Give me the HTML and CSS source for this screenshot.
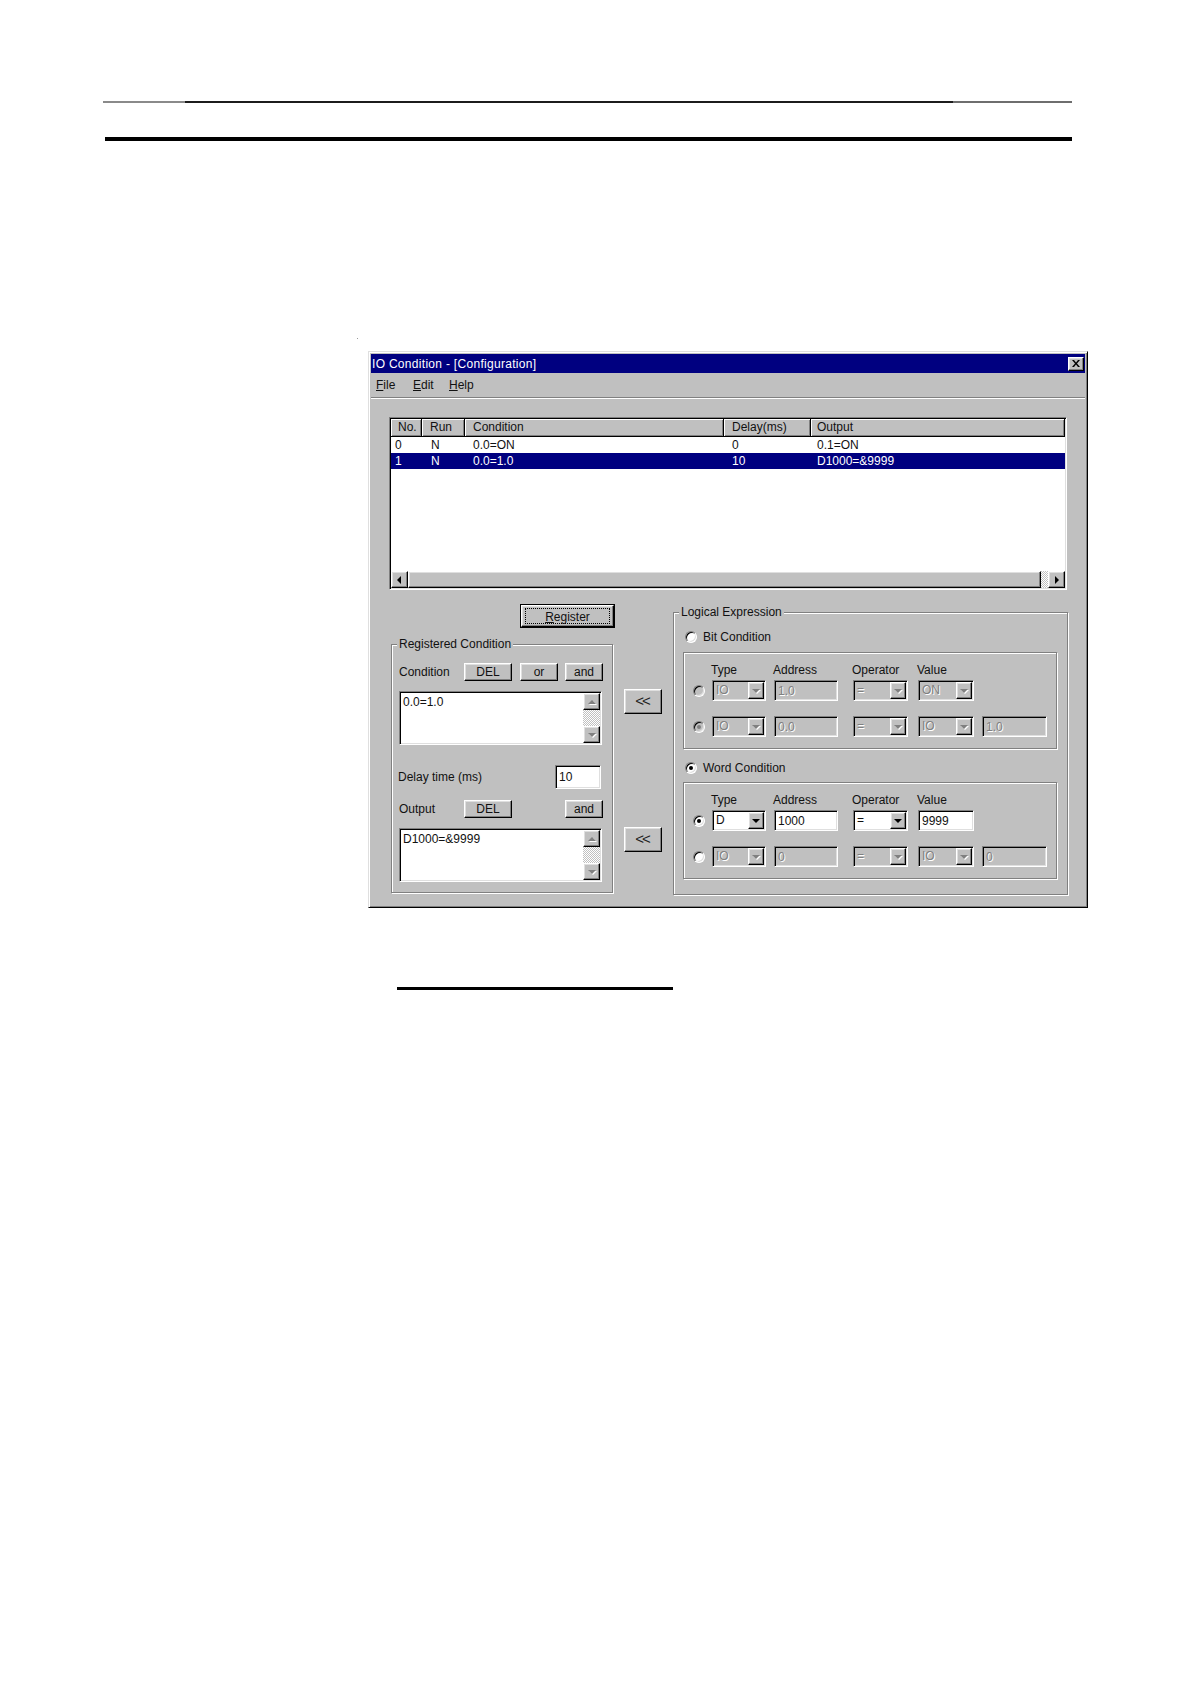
FILE: index.html
```html
<!DOCTYPE html>
<html>
<head>
<meta charset="utf-8">
<title>IO Condition</title>
<link rel="stylesheet" href="styles.css">
</head>
<body>
<div class="page">
  <div class="rule-thin"></div>
  <div class="rule-thick"></div>
  <div class="speck"></div>

  <div class="window">
    <div class="titlebar">
      <span class="title">IO Condition - [Configuration]</span>
      <span class="close-btn raised"><svg width="8" height="7" viewBox="0 0 8 7"><path d="M0 0h2l2 2.4L6 0h2L5 3.5 8 7H6L4 4.6 2 7H0l3-3.5z" fill="#000"/></svg></span>
    </div>
    <div class="menubar">
      <span class="menu-item m-file"><u>F</u>ile</span>
      <span class="menu-item m-edit"><u>E</u>dit</span>
      <span class="menu-item m-help"><u>H</u>elp</span>
    </div>

    <div class="client">
      <div class="listview sunken">
        <div class="lv-header">
          <span class="hcell col-no">No.</span>
          <span class="hcell col-run">Run</span>
          <span class="hcell col-cond">Condition</span>
          <span class="hcell col-delay">Delay(ms)</span>
          <span class="hcell col-out">Output</span>
        </div>
        <div class="lv-body">
          <div class="lv-row">
            <span class="cell col-no">0</span>
            <span class="cell col-run">N</span>
            <span class="cell col-cond">0.0=ON</span>
            <span class="cell col-delay">0</span>
            <span class="cell col-out">0.1=ON</span>
          </div>
          <div class="lv-row selected">
            <span class="cell col-no">1</span>
            <span class="cell col-run">N</span>
            <span class="cell col-cond">0.0=1.0</span>
            <span class="cell col-delay">10</span>
            <span class="cell col-out">D1000=&amp;9999</span>
          </div>
        </div>
        <div class="hscroll">
          <span class="sb-btn raised"><i class="tri-left"></i></span>
          <span class="sb-thumb raised"></span>
          <span class="sb-track"></span>
          <span class="sb-btn raised"><i class="tri-right"></i></span>
        </div>
      </div>

      <div class="lower">
        <div class="left-col">
          <div class="btn-default">
            <div class="btn-inner raised"><span class="focus"><u>R</u>egister</span></div>
          </div>

          <div class="group reg-group">
            <span class="group-label">Registered Condition</span>
            <div class="rg-row row-cond">
              <span class="rg-label">Condition</span>
              <span class="btn raised b-del">DEL</span>
              <span class="btn raised b-or">or</span>
              <span class="btn raised b-and">and</span>
            </div>
            <div class="memo sunken memo-cond">
              <span class="memo-text">0.0=1.0</span>
              <span class="vscroll">
                <span class="sb-btn raised"><i class="tri-up dis"></i></span>
                <span class="sb-track"></span>
                <span class="sb-btn raised"><i class="tri-down dis"></i></span>
              </span>
            </div>
            <div class="rg-row row-delay">
              <span class="rg-label">Delay time (ms)</span>
              <span class="field sunken f-delay">10</span>
            </div>
            <div class="rg-row row-out">
              <span class="rg-label">Output</span>
              <span class="btn raised b-del">DEL</span>
              <span class="btn raised b-and b-push">and</span>
            </div>
            <div class="memo sunken memo-out">
              <span class="memo-text">D1000=&amp;9999</span>
              <span class="vscroll">
                <span class="sb-btn raised"><i class="tri-up dis"></i></span>
                <span class="sb-track"></span>
                <span class="sb-btn raised"><i class="tri-down dis"></i></span>
              </span>
            </div>
          </div>
        </div>

        <div class="mid-col">
          <span class="btn raised arrow-btn a1">&lt;&lt;</span>
          <span class="btn raised arrow-btn a2">&lt;&lt;</span>
        </div>

        <div class="group logic-group">
          <span class="group-label">Logical Expression</span>
          <div class="opt-row opt-bit">
            <span class="radio"></span>
            <span class="opt-label">Bit Condition</span>
          </div>
          <div class="group sub-group">
            <div class="grid-row head-row">
              <span class="c-radio"></span>
              <span class="c-type">Type</span>
              <span class="c-addr">Address</span>
              <span class="c-op">Operator</span>
              <span class="c-val">Value</span>
            </div>
            <div class="grid-row r1">
              <span class="c-radio"><span class="radio dis"></span></span>
              <span class="combo sunken c-type dis"><span class="val">IO</span><span class="dd raised"><i class="tri-down dis"></i></span></span>
              <span class="field sunken c-addr dis">1.0</span>
              <span class="combo sunken c-op dis"><span class="val">=</span><span class="dd raised"><i class="tri-down dis"></i></span></span>
              <span class="combo sunken c-val dis"><span class="val">ON</span><span class="dd raised"><i class="tri-down dis"></i></span></span>
            </div>
            <div class="grid-row r2">
              <span class="c-radio"><span class="radio dis checked"><i class="dot"></i></span></span>
              <span class="combo sunken c-type dis"><span class="val">IO</span><span class="dd raised"><i class="tri-down dis"></i></span></span>
              <span class="field sunken c-addr dis">0.0</span>
              <span class="combo sunken c-op dis"><span class="val">=</span><span class="dd raised"><i class="tri-down dis"></i></span></span>
              <span class="combo sunken c-val dis"><span class="val">IO</span><span class="dd raised"><i class="tri-down dis"></i></span></span>
              <span class="field sunken c-ext dis">1.0</span>
            </div>
          </div>

          <div class="opt-row opt-word">
            <span class="radio checked"><i class="dot"></i></span>
            <span class="opt-label">Word Condition</span>
          </div>
          <div class="group sub-group sub-word">
            <div class="grid-row head-row">
              <span class="c-radio"></span>
              <span class="c-type">Type</span>
              <span class="c-addr">Address</span>
              <span class="c-op">Operator</span>
              <span class="c-val">Value</span>
            </div>
            <div class="grid-row r1">
              <span class="c-radio"><span class="radio checked"><i class="dot"></i></span></span>
              <span class="combo sunken c-type"><span class="val">D</span><span class="dd raised"><i class="tri-down"></i></span></span>
              <span class="field sunken c-addr">1000</span>
              <span class="combo sunken c-op"><span class="val">=</span><span class="dd raised"><i class="tri-down"></i></span></span>
              <span class="field sunken c-val">9999</span>
            </div>
            <div class="grid-row r2">
              <span class="c-radio"><span class="radio"></span></span>
              <span class="combo sunken c-type dis"><span class="val">IO</span><span class="dd raised"><i class="tri-down dis"></i></span></span>
              <span class="field sunken c-addr dis">0</span>
              <span class="combo sunken c-op dis"><span class="val">=</span><span class="dd raised"><i class="tri-down dis"></i></span></span>
              <span class="combo sunken c-val dis"><span class="val">IO</span><span class="dd raised"><i class="tri-down dis"></i></span></span>
              <span class="field sunken c-ext dis">0</span>
            </div>
          </div>
        </div>
      </div>
    </div>
  </div>

  <div class="underline"></div>
</div>
</body>
</html>
```

FILE: styles.css
```css
* { box-sizing: border-box; }

html, body {
  margin: 0;
  padding: 0;
  background: #fff;
}

body {
  font-family: "Liberation Sans", Arial, sans-serif;
  font-size: 12px;
  color: #111;
  line-height: 14px;
}

.page {
  width: 1190px;
  height: 1684px;
  overflow: hidden;
}

/* page rules */
.rule-thin {
  margin: 101px 0 0 103px;
  width: 969px;
  height: 2px;
  background: linear-gradient(to right, #8a8a8a 0, #8a8a8a 82px, #1c1c1c 82px, #1c1c1c 850px, #6e6e6e 850px);
}

.rule-thick {
  margin: 34px 0 0 105px;
  width: 967px;
  height: 4px;
  background: #000;
}

.speck {
  margin: 197px 0 0 357px;
  width: 1px;
  height: 1px;
  background: #9a9a9a;
}

.underline {
  margin: 79px 0 0 397px;
  width: 276px;
  height: 3px;
  background: #000;
}

/* bevels */
.raised {
  background: #c0c0c0;
  border: 1px solid;
  border-color: #fff #000 #000 #fff;
  box-shadow: inset -1px -1px 0 #808080, inset 1px 1px 0 #dfdfdf;
}

.sunken {
  border: 1px solid;
  border-color: #808080 #fff #fff #808080;
  box-shadow: inset 1px 1px 0 #000, inset -1px -1px 0 #dfdfdf;
  padding: 1px;
}

/* window */
.window {
  margin: 12px 0 0 368px;
  width: 720px;
  height: 557px;
  background: #c0c0c0;
  border: 1px solid;
  border-color: #dfdfdf #000 #000 #dfdfdf;
  box-shadow: inset 1px 1px 0 #fff, inset -1px -1px 0 #808080;
  padding: 2px;
  display: flex;
  flex-direction: column;
}

.titlebar {
  height: 19px;
  background: #000080;
  display: flex;
  align-items: center;
  justify-content: space-between;
  padding: 0 1px 0 1px;
}

.title {
  color: #fff;
  font-size: 12px;
  letter-spacing: 0.3px;
  white-space: nowrap;
}

.close-btn {
  width: 16px;
  height: 14px;
  display: flex;
  align-items: center;
  justify-content: center;
}

.close-btn svg { display: block; }

.menubar {
  height: 26px;
  display: flex;
  align-items: center;
  padding: 0 0 2px 5px;
  border-bottom: 1px solid #fff;
  box-shadow: inset 0 -1px 0 #808080;
}

.menu-item { white-space: nowrap; }
.m-file { width: 37px; }
.m-edit { width: 36px; }

.client {
  flex: 1;
  padding: 18px 18px 0 18px;
  display: flex;
  flex-direction: column;
}

/* list view */
.listview {
  height: 173px;
  background: #fff;
  display: flex;
  flex-direction: column;
}

.lv-header {
  height: 18px;
  display: flex;
  flex: none;
}

.hcell {
  height: 18px;
  background: #c0c0c0;
  border-right: 1px solid #000;
  border-bottom: 1px solid #000;
  box-shadow: inset 1px 1px 0 #fff, inset -1px -1px 0 #808080;
  line-height: 17px;
  white-space: nowrap;
}

.col-no { width: 31px; padding-left: 7px; }
.col-run { width: 43px; padding-left: 8px; }
.col-cond { width: 259px; padding-left: 8px; }
.col-delay { width: 87px; padding-left: 8px; }
.col-out { width: 254px; padding-left: 6px; }

.lv-body {
  flex: 1;
  background: #fff;
}

.lv-row {
  height: 16px;
  display: flex;
  line-height: 16px;
}

.lv-row .col-no { padding-left: 4px; }
.lv-row .col-run { padding-left: 9px; }

.lv-row.selected {
  background: #000080;
  color: #fff;
}

.cell { white-space: nowrap; }

.hscroll {
  height: 17px;
  display: flex;
  flex: none;
}

.sb-btn {
  width: 17px;
  height: 17px;
  display: flex;
  align-items: center;
  justify-content: center;
  flex: none;
}

.sb-thumb { flex: 1; height: 17px; }

.sb-track {
  width: 7px;
  background: repeating-conic-gradient(#fff 0 25%, #c0c0c0 0 50%) 0 0 / 2px 2px;
}

/* triangles */
.tri-left, .tri-right, .tri-up, .tri-down {
  display: block;
  width: 0;
  height: 0;
}

.tri-left {
  border-top: 4px solid transparent;
  border-bottom: 4px solid transparent;
  border-right: 4px solid #000;
  margin-left: -1px;
}

.tri-right {
  border-top: 4px solid transparent;
  border-bottom: 4px solid transparent;
  border-left: 4px solid #000;
}

.tri-up {
  border-left: 4px solid transparent;
  border-right: 4px solid transparent;
  border-bottom: 4px solid #000;
}

.tri-down {
  border-left: 4px solid transparent;
  border-right: 4px solid transparent;
  border-top: 4px solid #000;
}

.tri-up.dis { border-bottom-color: #808080; filter: drop-shadow(1px 1px 0 #fff); }
.tri-down.dis { border-top-color: #808080; filter: drop-shadow(1px 1px 0 #fff); }

/* lower area */
.lower {
  display: flex;
  align-items: flex-start;
  padding-left: 2px;
}

.left-col {
  width: 222px;
  flex: none;
  display: flex;
  flex-direction: column;
}

.btn-default {
  margin: 14px 0 0 129px;
  width: 95px;
  height: 24px;
  border: 1px solid #000;
}

.btn-inner {
  width: 100%;
  height: 100%;
  padding: 2px 3px;
  display: flex;
}

.focus {
  flex: 1;
  border: 1px dotted #000;
  display: flex;
  align-items: center;
  justify-content: center;
  padding-top: 1px;
}

.btn {
  display: flex;
  align-items: center;
  justify-content: center;
  height: 18px;
  flex: none;
  white-space: nowrap;
}

/* group box */
.group {
  position: relative;
  border: 1px solid #808080;
  box-shadow: inset 1px 1px 0 #fff, 1px 1px 0 #fff;
}

.group-label {
  position: absolute;
  top: -8px;
  left: 5px;
  padding: 0 2px;
  background: #c0c0c0;
  line-height: 14px;
  white-space: nowrap;
}

.reg-group {
  margin-top: 16px;
  height: 249px;
  width: 222px;
  padding: 18px 0 0 7px;
  display: flex;
  flex-direction: column;
}

.rg-row {
  width: 204px;
  display: flex;
  align-items: center;
}

.rg-label { white-space: nowrap; }
.row-cond .rg-label, .row-out .rg-label { width: 65px; }

.row-cond { height: 18px; }
.b-del { width: 48px; }
.b-or { width: 38px; margin-left: 8px; }
.b-and { width: 38px; margin-left: 7px; }
.b-push { margin-left: auto; }

.memo {
  width: 203px;
  height: 54px;
  background: #fff;
  display: flex;
}

.memo-cond { margin-top: 10px; }
.memo-out { margin-top: 10px; }

.memo-text {
  flex: 1;
  padding: 2px 0 0 2px;
  white-space: nowrap;
}

.vscroll {
  width: 17px;
  display: flex;
  flex-direction: column;
}

.vscroll .sb-track {
  width: auto;
  flex: 1;
}

.row-delay {
  margin-top: 20px;
  height: 24px;
  justify-content: space-between;
}

.row-delay .rg-label { margin-left: -1px; }

.field {
  display: flex;
  align-items: center;
  background: #fff;
  padding-left: 3px;
  white-space: nowrap;
}

.f-delay {
  width: 46px;
  height: 24px;
  margin-right: 2px;
}

.row-out {
  margin-top: 11px;
  height: 18px;
}

/* middle buttons */
.mid-col {
  width: 38px;
  margin-left: 11px;
  flex: none;
  display: flex;
  flex-direction: column;
}

.arrow-btn {
  width: 38px;
  height: 25px;
  letter-spacing: -2px;
  font-size: 15px;
  padding: 0 2px 2px 0;
  color: #222;
}

.a1 { margin-top: 99px; }
.a2 { margin-top: 113px; }

/* logical expression */
.logic-group {
  margin: 22px 0 0 11px;
  width: 395px;
  height: 283px;
  flex: none;
  display: flex;
  flex-direction: column;
}

.opt-row {
  height: 16px;
  display: flex;
  align-items: center;
  padding-left: 11px;
}

.opt-bit { margin-top: 16px; }
.opt-word { margin-top: 11px; }

.opt-label { margin-left: 6px; white-space: nowrap; }

.sub-group {
  margin: 7px 0 0 9px;
  width: 374px;
  height: 97px;
  display: flex;
  flex-direction: column;
}

.sub-word { margin-top: 6px; }

.grid-row {
  display: flex;
  align-items: center;
}

.head-row {
  margin-top: 10px;
  height: 14px;
  white-space: nowrap;
}

.r1 { margin-top: 3px; height: 21px; }
.r2 { margin-top: 15px; height: 21px; }

.c-radio {
  width: 12px;
  margin-left: 9px;
  display: flex;
  flex: none;
}

.c-type { width: 54px; margin-left: 7px; flex: none; }
.c-addr { width: 64px; margin-left: 8px; flex: none; }
.c-op { width: 55px; margin-left: 15px; flex: none; }
.c-val { width: 56px; margin-left: 10px; flex: none; }
.c-ext { width: 65px; margin-left: 8px; flex: none; }

.head-row .c-type { margin-left: 6px; }

.combo, .grid-row .field {
  height: 21px;
}

.combo {
  display: flex;
  background: #fff;
}

.combo .val {
  flex: 1;
  padding-left: 2px;
  line-height: 17px;
  white-space: nowrap;
}

.dd {
  width: 16px;
  height: 17px;
  display: flex;
  align-items: center;
  justify-content: center;
  flex: none;
}

.dis.combo, .dis.field {
  background: #c0c0c0;
  color: #808080;
  text-shadow: 1px 1px 0 #fff;
}

/* radio */
.radio {
  width: 12px;
  height: 12px;
  border-radius: 50%;
  border: 1px solid;
  border-color: #808080 #fff #fff #808080;
  box-shadow: inset 1px 1px 0 #000, inset -1px -1px 0 #dfdfdf;
  background: #fff;
  display: flex;
  align-items: center;
  justify-content: center;
  flex: none;
}

.radio.dis { background: #c0c0c0; }

.radio .dot {
  display: block;
  width: 4px;
  height: 4px;
  border-radius: 50%;
  background: #000;
}

.radio.dis .dot { background: #808080; }
```
